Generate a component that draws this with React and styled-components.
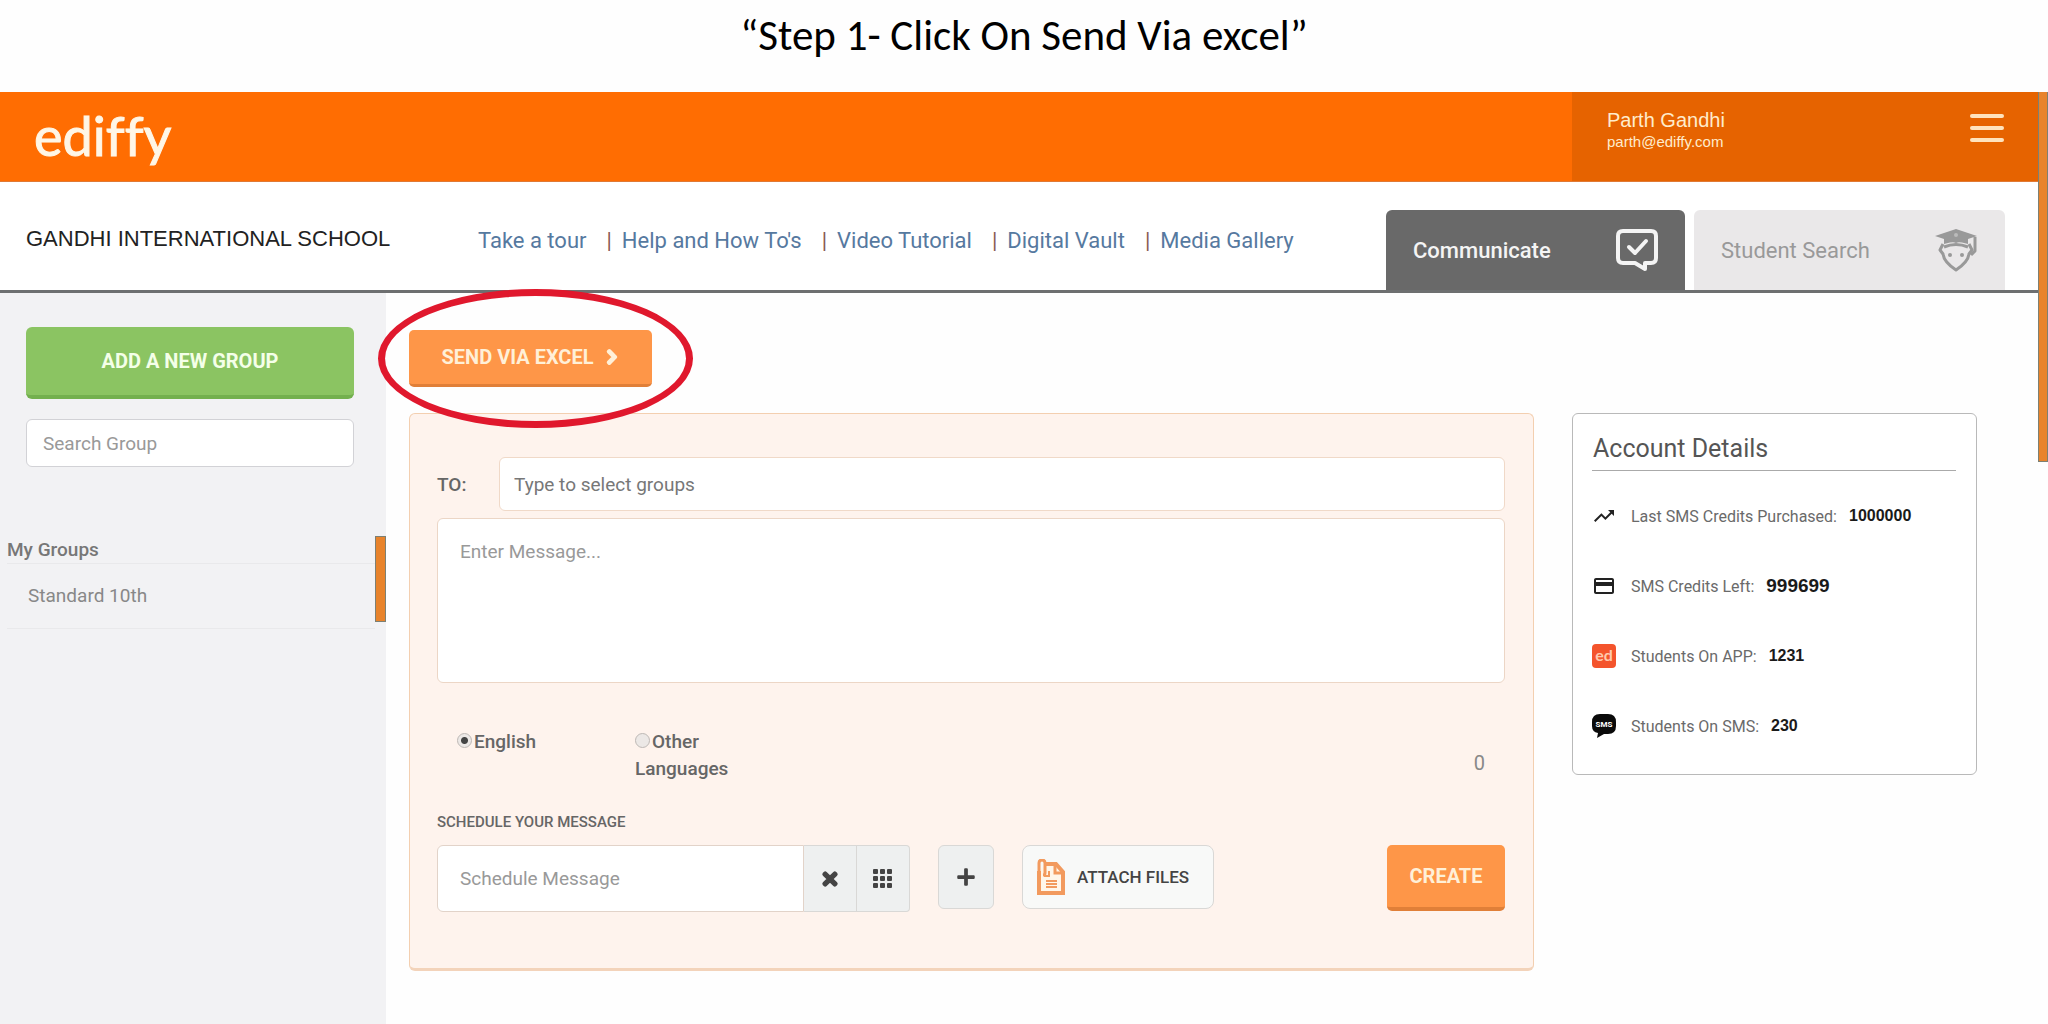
import React, { useState } from 'react'
import styled, { createGlobalStyle } from 'styled-components'
import { FaChevronRight, FaPlus, FaTimes } from 'react-icons/fa'
import { MdPayment, MdTrendingUp } from 'react-icons/md'

const links = ["Take a tour", "Help and How To's", "Video Tutorial", "Digital Vault", "Media Gallery"]

const ChatCheckIcon = () => (
    <svg width="42" height="42" viewBox="0 0 42 42" fill="none" stroke="currentColor" strokeWidth="4" strokeLinejoin="round" strokeLinecap="round">
        <path d="M7 2h28q5 0 5 5v22q0 5-5 5h-6v6l-10-6H7q-5 0-5-5V7q0-5 5-5z" />
        <path d="M13 18l6 6 11-12" />
    </svg>
)

const StudentIcon = () => (
    <svg width="44" height="44" viewBox="0 0 44 44" fill="none" stroke="currentColor" strokeWidth="3" strokeLinejoin="round">
        <path d="M22 1l21 7-21 7-21-7z" fill="currentColor" stroke="none" />
        <path d="M10 10v6q12-4 24 0v-6l-12 4z" fill="currentColor" stroke="none" />
        <path d="M10 19q12-5 24 0" />
        <path d="M9 16l-3 6 3 4q1 8 13 16 12-8 13-16l3-4-3-6" />
        <path d="M41 9v14l-4 4" />
        <circle cx="16" cy="27" r="2" fill="currentColor" stroke="none" />
        <circle cx="28" cy="27" r="2" fill="currentColor" stroke="none" />
        <circle cx="22" cy="7" r="2" fill="#bbb" stroke="none" />
    </svg>
)

const GridIcon = () => (
    <svg width="20" height="20" viewBox="0 0 20 20" fill="currentColor">
        {[0, 7, 14].map((y) => [0, 7, 14].map((x) => (
            <rect key={x + '-' + y} x={x} y={y} width="5" height="5" rx="1" />
        )))}
    </svg>
)

const AttachIcon = () => (
    <svg width="28" height="36" viewBox="0 0 28 36" fill="none" stroke="#f29a5e" strokeWidth="4">
        <path d="M9 5h10l7 8v21H2V12" fill="#fff6ea" />
        <path d="M18 4v10h9" strokeWidth="3" />
        <path d="M2 15V4q0-3 3-3t3 3v10q0 2-2 2" strokeWidth="3" />
        <path d="M7 17h5v-5M9 22h11M9 25h11M9 28h11" strokeWidth="2" />
    </svg>
)

const AppIcon = () => (
    <svg width="24" height="24" viewBox="0 0 24 24">
        <rect width="24" height="24" rx="4" fill="#f4542c" />
        <text x="12" y="17" textAnchor="middle" fontFamily="Lato, sans-serif" fontWeight="700" fontSize="16" fill="#ffc9ae">ed</text>
    </svg>
)

const SmsIcon = () => (
    <svg width="24" height="24" viewBox="0 0 24 24">
        <path d="M8 0h8q8 0 8 8v4q0 8-8 8h-4l-7 4 1-5q-6-1-6-7V8q0-8 8-8z" fill="#0a0a0a" />
        <text x="12" y="13" textAnchor="middle" fontFamily="Roboto, sans-serif" fontWeight="700" fontSize="8" fill="#fff">SMS</text>
    </svg>
)

const details = [
    { icon: <MdTrendingUp />, label: 'Last SMS Credits Purchased:', value: '1000000' },
    { icon: <MdPayment />, label: 'SMS Credits Left:', value: '999699', large: true },
    { icon: <AppIcon />, label: 'Students On APP:', value: '1231' },
    { icon: <SmsIcon />, label: 'Students On SMS:', value: '230' },
]

const App = () => {
    const [message, setMessage] = useState('')
    const [schedule, setSchedule] = useState('')
    const [language, setLanguage] = useState('english')

    return (
        <Container>
            <GlobalStyle />
            <Title>“Step 1- Click On Send Via excel”</Title>

            <Screen>
                <Page>
                    <Header>
                        <Logo href="#">ediffy</Logo>
                        <User>
                            <div>
                                <Username>Parth Gandhi</Username>
                                <Useremail>parth@ediffy.com</Useremail>
                            </div>
                            <Menubutton aria-label="Menu"><i /><i /><i /></Menubutton>
                        </User>
                    </Header>

                    <Subheader>
                        <School>GANDHI INTERNATIONAL SCHOOL</School>
                        <Nav>
                            {links.map((link) => <Navlink key={link}><a href="#">{link}</a></Navlink>)}
                        </Nav>
                        <Tabs>
                            <Tab $active>Communicate<ChatCheckIcon /></Tab>
                            <Tab>Student Search<StudentIcon /></Tab>
                        </Tabs>
                    </Subheader>

                    <Body>
                        <Sidebar>
                            <Sidebartop>
                                <Addbutton>ADD A NEW GROUP</Addbutton>
                                <Searchinput aria-label="Search Group" placeholder="Search Group" />
                            </Sidebartop>
                            <Groups>
                                <Grouplist>
                                    <Grouptitle>My Groups</Grouptitle>
                                    <Group>Standard 10th</Group>
                                </Grouplist>
                                <Groupthumb />
                            </Groups>
                        </Sidebar>

                        <Main>
                            <Sendrow>
                                <Sendbutton>SEND VIA EXCEL <FaChevronRight size={16} stroke="currentColor" strokeWidth={70} /></Sendbutton>
                                <Highlight />
                            </Sendrow>

                            <Columns>
                                <Composer onSubmit={(e) => e.preventDefault()}>
                                    <Torow>
                                        <Tolabel htmlFor="to">TO:</Tolabel>
                                        <Toinput id="to" placeholder="Type to select groups" />
                                    </Torow>
                                    <Message
                                        aria-label="Message"
                                        placeholder="Enter Message..."
                                        value={message}
                                        onChange={(e) => setMessage(e.target.value)}
                                    />
                                    <Languages>
                                        <Language>
                                            <Radio name="language" checked={language === 'english'} onChange={() => setLanguage('english')} />English
                                        </Language>
                                        <Language>
                                            <Radio name="language" checked={language === 'other'} onChange={() => setLanguage('other')} />Other Languages
                                        </Language>
                                        <Counter>{message.length}</Counter>
                                    </Languages>
                                    <Schedulelabel htmlFor="schedule">SCHEDULE YOUR MESSAGE</Schedulelabel>
                                    <Actions>
                                        <Schedule>
                                            <Scheduleinput
                                                id="schedule"
                                                placeholder="Schedule Message"
                                                value={schedule}
                                                onChange={(e) => setSchedule(e.target.value)}
                                            />
                                            <Addon type="button" aria-label="Clear" onClick={() => setSchedule('')}><FaTimes size={20} stroke="currentColor" strokeWidth={40} /></Addon>
                                            <Addon type="button" aria-label="Pick date"><GridIcon /></Addon>
                                        </Schedule>
                                        <Plusbutton type="button" aria-label="Add"><FaPlus size={20} /></Plusbutton>
                                        <Attachbutton type="button"><AttachIcon />ATTACH FILES</Attachbutton>
                                        <Createbutton>CREATE</Createbutton>
                                    </Actions>
                                </Composer>

                                <Account>
                                    <Accounttitle>Account Details</Accounttitle>
                                    {details.map((item) => (
                                        <Detail key={item.label}>
                                            <Detailicon>{item.icon}</Detailicon>
                                            {item.label}
                                            <Detailvalue $large={item.large}>{item.value}</Detailvalue>
                                        </Detail>
                                    ))}
                                </Account>
                            </Columns>
                        </Main>
                    </Body>
                </Page>
                <Pagethumb />
            </Screen>
        </Container>
    )
}

export default App

const GlobalStyle = createGlobalStyle`
* {
    box-sizing : border-box;
}
body {
    margin : 0;
    background-color : #fefefe;
    font-family : Roboto, "Liberation Sans", sans-serif;
    font-size : 19px;
    color : #666;
}
button, input, textarea {
    font : inherit;
}
button {
    cursor : pointer;
}
a {
    color : inherit;
    text-decoration : none;
}
`
const Container = styled.div`
display : flex;
flex-direction : column;
min-height : 100vh;
`
const Title = styled.h1`
margin : 0;
padding : 12px 0 32px;
text-align : center;
font : 400 43px/48px Carlito, Lato, sans-serif;
color : #000;
`
const Screen = styled.div`
display : flex;
flex-grow : 1;
`
const Page = styled.div`
display : flex;
flex-direction : column;
flex-grow : 1;
`
const Thumb = styled.div`
background-color : #e8832b;
border : 1px solid #7d8073;
`
const Pagethumb = styled(Thumb)`
width : 10px;
height : 370px;
border-top : none;
`
const Header = styled.header`
display : flex;
justify-content : space-between;
height : 90px;
background-color : #ff6d02;
border-bottom : 1px solid #e07a35;
`
const Logo = styled.a`
padding-left : 34px;
font : 400 54px/88px Lato, sans-serif;
font-variant-ligatures : none;
-webkit-text-stroke : 1px #fff6e6;
color : #fff6e6;
`
const User = styled.div`
display : flex;
justify-content : space-between;
align-items : flex-start;
width : 466px;
padding : 16px 34px 0 35px;
background-color : #e66300;
font-family : "Liberation Sans", Arial, sans-serif;
color : #ffeccc;
`
const Username = styled.div`
font-size : 20px;
line-height : 24px;
`
const Useremail = styled.div`
font-size : 15px;
line-height : 20px;
`
const Menubutton = styled.button`
display : flex;
flex-direction : column;
gap : 8px;
padding : 6px 0;
border : none;
background : none;
i {
    width : 34px;
    height : 4px;
    border-radius : 2px;
    background-color : #ffe3bd;
}
`
const Subheader = styled.div`
display : flex;
height : 111px;
padding : 0 33px 0 26px;
background-color : #fff;
border-bottom : 3px solid #6d6f70;
`
const School = styled.div`
flex-shrink : 0;
width : 452px;
padding-top : 42px;
font : 400 22px/30px "Liberation Sans", Arial, sans-serif;
color : #222;
`
const Nav = styled.nav`
display : flex;
flex-grow : 1;
padding-top : 45px;
font-size : 22px;
line-height : 28px;
color : #56799f;
`
const Navlink = styled.span`
white-space : nowrap;
& + & {
    margin-left : 20px;
}
& + &::before {
    content : '|';
    margin-right : 10px;
    color : #8a5a55;
}
`
const Tabs = styled.div`
display : flex;
gap : 9px;
padding-top : 28px;
`
const Tab = styled.button`
display : flex;
justify-content : space-between;
align-items : center;
width : ${(props) => (props.$active ? 299 : 311)}px;
padding : 0 27px;
border : none;
border-radius : 6px 6px 0 0;
font-size : 22px;
font-weight : ${(props) => (props.$active ? 500 : 400)};
background-color : ${(props) => (props.$active ? '#696969' : '#eae8e9')};
color : ${(props) => (props.$active ? '#f4f4f4' : '#999')};
`
const Body = styled.div`
display : flex;
flex-grow : 1;
`
const Sidebar = styled.aside`
flex-shrink : 0;
width : 386px;
background-color : #f2f2f4;
`
const Sidebartop = styled.div`
display : flex;
flex-direction : column;
gap : 20px;
padding : 34px 32px 0 26px;
`
const Addbutton = styled.button`
height : 72px;
border : none;
border-bottom : 4px solid #73b04e;
border-radius : 6px;
background-color : #8bc462;
font-size : 20px;
font-weight : 700;
color : #f4ffe8;
`
const Searchinput = styled.input`
height : 48px;
padding : 0 16px;
border : 1px solid #d2d2d6;
border-radius : 6px;
background-color : #fff;
&::placeholder {
    color : #999;
}
`
const Groups = styled.div`
display : flex;
padding-top : 69px;
`
const Grouplist = styled.div`
flex-grow : 1;
padding-left : 7px;
`
const Grouptitle = styled.div`
border-bottom : 1px solid #e9e9eb;
line-height : 27px;
font-weight : 500;
color : #777;
`
const Group = styled.div`
padding : 0 21px;
border-bottom : 1px solid #e9e9eb;
line-height : 64px;
color : #888;
`
const Groupthumb = styled(Thumb)`
width : 11px;
height : 86px;
`
const Main = styled.main`
flex-grow : 1;
padding : 37px 61px 54px 23px;
`
const Sendrow = styled.div`
position : relative;
width : fit-content;
`
const Orangebutton = styled.button`
border : none;
border-bottom : 3px solid #e07f38;
border-radius : 5px;
background-color : #fe9648;
font-size : 20px;
font-weight : 700;
color : #fff0d8;
`
const Sendbutton = styled(Orangebutton)`
display : flex;
align-items : center;
justify-content : center;
gap : 10px;
width : 243px;
height : 57px;
svg {
    overflow : visible;
}
`
// red ring around the excel button
const Highlight = styled.div`
position : absolute;
top : -41px;
left : -31px;
width : 315px;
height : 139px;
border : 7px solid #e0182d;
border-radius : 50%;
pointer-events : none;
`
const Columns = styled.div`
display : flex;
align-items : flex-start;
gap : 38px;
padding-top : 26px;
`
const Composer = styled.form`
display : flex;
flex-direction : column;
flex-grow : 1;
padding : 43px 28px 56px 27px;
border : 1px solid #f3cfb0;
border-bottom : 3px solid #f3d3ba;
border-radius : 6px;
background-color : #fef3ed;
`
const Torow = styled.div`
display : flex;
align-items : center;
`
const Tolabel = styled.label`
width : 62px;
font-weight : 500;
`
const Toinput = styled.input`
flex-grow : 1;
height : 54px;
padding : 0 14px;
border : 1px solid #f0d9c8;
border-radius : 6px;
background-color : #fff;
&::placeholder {
    color : #777;
}
`
const Message = styled.textarea`
height : 165px;
margin-top : 7px;
padding : 21px 22px;
border : 1px solid #ecd6c6;
border-radius : 6px;
background-color : #fff;
resize : none;
&::placeholder {
    color : #999;
}
`
const Languages = styled.div`
display : flex;
padding : 45px 20px 0;
line-height : 27px;
`
const Language = styled.label`
width : 108px;
margin-right : 70px;
font-weight : 500;
`
const Radio = styled.input.attrs({ type: 'radio' })`
appearance : none;
width : 15px;
height : 15px;
margin : 0 2px 0 0;
border : 1px solid #bdb8b5;
border-radius : 50%;
background : ${(props) => (props.checked ? 'radial-gradient(#444 0 3px, #ece8e6 4px)' : '#ece8e6')};
`
const Counter = styled.output`
margin-left : auto;
padding-top : 22px;
font-size : 20px;
color : #888;
`
const Schedulelabel = styled.label`
padding : 30px 0 13px;
font-size : 15px;
font-weight : 500;
line-height : 20px;
`
const Actions = styled.div`
display : flex;
align-items : flex-start;
gap : 28px;
`
const Schedule = styled.div`
display : flex;
height : 67px;
`
const Scheduleinput = styled.input`
width : 367px;
padding : 0 22px;
border : 1px solid #e2d3c9;
border-radius : 6px 0 0 6px;
background-color : #fff;
&::placeholder {
    color : #999;
}
`
const Graybutton = styled.button`
display : flex;
align-items : center;
justify-content : center;
border : 1px solid #d9d8d6;
background-color : #eef0f0;
color : #444;
`
const Addon = styled(Graybutton)`
width : 53px;
border-left : none;
&:last-child {
    border-radius : 0 4px 4px 0;
}
`
const Plusbutton = styled(Graybutton)`
width : 56px;
height : 64px;
border-radius : 6px;
`
const Attachbutton = styled(Graybutton)`
gap : 12px;
height : 64px;
padding : 0 24px 0 14px;
border-radius : 8px;
background-color : #f8f9f8;
font-size : 17px;
font-weight : 500;
`
const Createbutton = styled(Orangebutton)`
width : 118px;
height : 66px;
margin-left : auto;
border-bottom-width : 4px;
`
const Account = styled.section`
flex-shrink : 0;
width : 405px;
padding : 17px 20px 13px 19px;
border : 1px solid #b9b9b9;
border-radius : 6px;
background-color : #fff;
`
const Accounttitle = styled.h2`
margin : 0 0 10px;
padding : 0 0 3px 1px;
border-bottom : 1px solid #aaa;
font-size : 25px;
font-weight : 400;
line-height : 36px;
color : #555;
`
const Detail = styled.div`
display : flex;
align-items : center;
height : 70px;
font-size : 16px;
color : #6a6a6a;
`
const Detailicon = styled.span`
display : flex;
width : 39px;
font-size : 24px;
color : #222;
`
const Detailvalue = styled.b`
margin-left : 12px;
font-family : "Liberation Sans", Arial, sans-serif;
font-size : ${(props) => (props.$large ? 19 : 16)}px;
color : #1a1a1a;
`
